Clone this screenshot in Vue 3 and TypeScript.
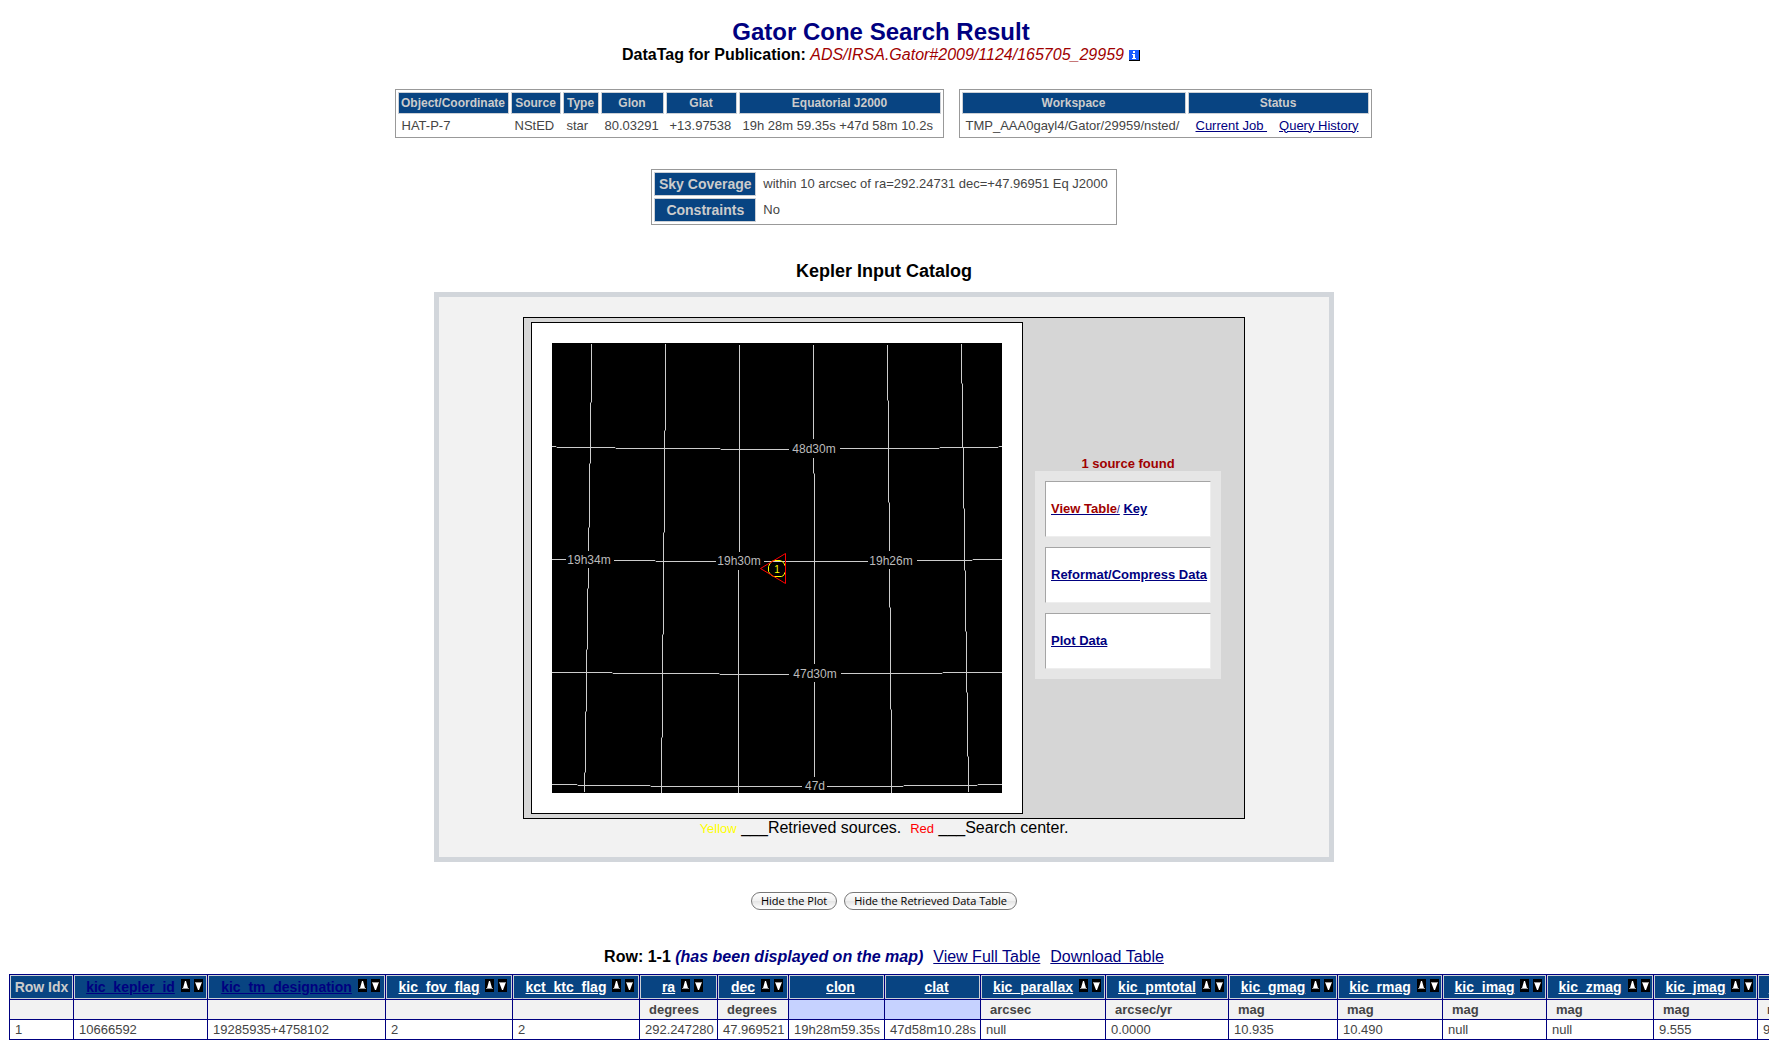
<script setup lang="ts">
interface Column {
  name: string
  width: number
  unit: string
  value: string
  sortable: boolean
  link: boolean
  key?: boolean
  derived?: boolean
}

interface GridLabel {
  text: string
  x: number
  y: number
}

const objectHeads = [
  { label: 'Object/Coordinate', value: 'HAT-P-7', width: 111 },
  { label: 'Source', value: 'NStED', width: 50 },
  { label: 'Type', value: 'star', width: 36 },
  { label: 'Glon', value: '80.03291', width: 63 },
  { label: 'Glat', value: '+13.97538', width: 71 },
  { label: 'Equatorial J2000', value: '19h 28m 59.35s +47d 58m 10.2s', width: 202 },
]

function column(name: string, width: number, unit: string, value: string, extra: Partial<Column> = {}): Column {
  return { name, width, unit, value, sortable: true, link: true, ...extra }
}

const columns: Column[] = [
  column('Row Idx', 64, '', '1', { sortable: false, link: false }),
  column('kic_kepler_id', 134, '', '10666592', { key: true }),
  column('kic_tm_designation', 178, '', '19285935+4758102', { key: true }),
  column('kic_fov_flag', 127, '', '2'),
  column('kct_ktc_flag', 127, '', '2'),
  column('ra', 78, 'degrees', '292.247280'),
  column('dec', 71, 'degrees', '47.969521'),
  column('clon', 96, '', '19h28m59.35s', { sortable: false, derived: true }),
  column('clat', 96, '', '47d58m10.28s', { sortable: false, derived: true }),
  column('kic_parallax', 125, 'arcsec', 'null'),
  column('kic_pmtotal', 123, 'arcsec/yr', '0.0000'),
  column('kic_gmag', 109, 'mag', '10.935'),
  column('kic_rmag', 105, 'mag', '10.490'),
  column('kic_imag', 104, 'mag', 'null'),
  column('kic_zmag', 107, 'mag', 'null'),
  column('kic_jmag', 104, 'mag', '9.555'),
  column('kic_hmag', 107, 'mag', '9.344'),
]

const tableWidth = columns.reduce((sum, c) => sum + c.width, 1)

const meridians = [
  'M39.5 1V59L38.5 60V120L37.5 121V184L36.5 185V208M36.5 225V245L35.5 246V306L34.5 307V368L33.5 369V429L32.5 430V449',
  'M113.5 1V87L112.5 88V189L111.5 190V291L110.5 292V394L109.5 395V450',
  'M187.5 2V209M186.5 227V450',
  'M261.5 2V96M261.5 115V130L262.5 131V321M262.5 339V434',
  'M335.5 2V57L336.5 58V159L337.5 160V208M337.5 226V264L338.5 265V366L339.5 367V450',
  'M409.5 1V40L410.5 41V104L411.5 105V165L412.5 166V227L413.5 228V288L414.5 289V349L415.5 350V413L416.5 414V449',
]

const parallels = [
  'M0 103.5H4L5 104.5H63L64 105.5H168L169 106.5H237M288 105.5H387L388 104.5H446L447 103.5H450',
  'M0 216.5H14M62 217.5H103L104 218.5H164M212 218.5H316M365 217.5H420L421 216.5H450',
  'M0 329.5H60L61 330.5H167L168 331.5H237M289 330.5H390L391 329.5H450',
  'M0 441.5H25L26 442.5H98L99 443.5H250M275 443.5H351L352 442.5H425L426 441.5H450',
]

const gridLabels: GridLabel[] = [
  { text: '48d30m', x: 262, y: 110 },
  { text: '19h34m', x: 37, y: 221 },
  { text: '19h30m', x: 187, y: 222 },
  { text: '19h26m', x: 339, y: 222 },
  { text: '47d30m', x: 263, y: 335 },
  { text: '47d', x: 263, y: 447 },
]
</script>

<template>
  <main class="page">
    <div class="sheet">
      <header class="masthead">
        <h1>Gator Cone Search Result</h1>
        <p>
          <b>DataTag for Publication:&nbsp;</b>
          <i class="tag">ADS/IRSA.Gator#2009/1124/165705_29959</i>
          <a class="info" href="#info" aria-label="About the DataTag">
            <svg width="11" height="11" viewBox="0 0 11 11" shape-rendering="crispEdges" aria-hidden="true">
              <rect width="11" height="11" fill="#000" />
              <rect width="10" height="10" fill="#1a5cff" />
              <path d="M4 1h2v2H4zM3 4h3v4h1v1H3V8h1V5H3z" fill="#fff" />
            </svg>
          </a>
        </p>
      </header>

      <section class="summary">
        <table class="box">
          <colgroup>
            <col v-for="h in objectHeads" :key="h.label" :style="{ width: h.width + 'px' }" />
          </colgroup>
          <thead>
            <tr><th v-for="h in objectHeads" :key="h.label" scope="col">{{ h.label }}</th></tr>
          </thead>
          <tbody>
            <tr><td v-for="h in objectHeads" :key="h.label">{{ h.value }}</td></tr>
          </tbody>
        </table>
        <table class="box">
          <colgroup>
            <col class="workspace-col" />
            <col class="status-col" />
          </colgroup>
          <thead>
            <tr><th scope="col">Workspace</th><th scope="col">Status</th></tr>
          </thead>
          <tbody>
            <tr>
              <td>TMP_AAA0gayl4/Gator/29959/nsted/</td>
              <td class="status"><a href="#job">Current Job&nbsp;</a><a href="#history">Query History</a></td>
            </tr>
          </tbody>
        </table>
      </section>

      <table class="box query">
        <tbody>
          <tr><th scope="row">Sky Coverage</th><td>within 10 arcsec of ra=292.24731 dec=+47.96951 Eq J2000</td></tr>
          <tr><th scope="row">Constraints</th><td>No</td></tr>
        </tbody>
      </table>

      <h2>Kepler Input Catalog</h2>

      <section class="frame">
        <div class="stage">
          <div class="plot">
            <svg width="450" height="450" viewBox="0 0 450 450" role="img" aria-label="Sky map of the search region">
              <rect width="450" height="450" fill="#000" />
              <g fill="none" stroke="#ccc" stroke-width="1">
                <path v-for="d in meridians" :key="d" :d="d" />
                <path v-for="d in parallels" :key="d" :d="d" />
              </g>
              <g class="grid-labels">
                <text v-for="l in gridLabels" :key="l.text" :x="l.x" :y="l.y">{{ l.text }}</text>
              </g>
              <path d="M221.5 217.5H228.5L231.5 219.5L233.5 223.5V228.5L231.5 232.5L229.5 233.5H221.5L218.5 231.5L216.5 228.5V223.5L218.5 219.5Z" fill="none" stroke="#ff0" />
              <path d="M208.5 225.5L233.5 210.5V240.5Z" fill="none" stroke="#f00" />
              <text class="marker" x="225" y="230">1</text>
            </svg>
          </div>
          <div class="side">
            <p class="found">1 source found</p>
            <nav class="menu">
              <div class="entry"><a href="#table"><span class="view">View Table</span><span class="slash">/</span></a>&nbsp;<a href="#key">Key</a></div>
              <div class="entry"><a href="#reformat">Reformat/Compress Data</a></div>
              <div class="entry"><a href="#plot">Plot Data</a></div>
            </nav>
          </div>
        </div>
        <p class="legend"><span class="yellow">Yellow</span> ___Retrieved sources.&nbsp; <span class="red">Red</span> ___Search center.</p>
      </section>

      <div class="actions">
        <button type="button">Hide the Plot</button>
        <button type="button">Hide the Retrieved Data Table</button>
      </div>

      <p class="rows">
        <b>Row: 1-1 <i>(has been displayed on the map)</i></b>
        <a href="#full">View Full Table</a>
        <a href="#download">Download Table</a>
      </p>
    </div>

    <div class="results">
      <table :style="{ width: tableWidth + 'px' }">
        <colgroup>
          <col v-for="c in columns" :key="c.name" :style="{ width: c.width + 'px' }" />
        </colgroup>
        <thead>
          <tr class="names">
            <th v-for="c in columns" :key="c.name" scope="col">
              <div class="name" :class="{ linked: c.link }">
                <a v-if="c.link" :href="'#' + c.name" :class="{ key: c.key }">{{ c.name }}</a>
                <span v-else>{{ c.name }}</span>
                <span v-if="c.sortable" class="sorters">
                  <button type="button" :aria-label="'Sort ' + c.name + ' ascending'">
                    <svg width="9" height="13" viewBox="0 0 9 13" aria-hidden="true">
                      <rect width="9" height="13" fill="#000" />
                      <path d="M4 2h1L7 9H2z" fill="#fff" /><path d="M1 9.5h7" stroke="#999" />
                    </svg>
                  </button>
                  <button type="button" :aria-label="'Sort ' + c.name + ' descending'">
                    <svg width="9" height="13" viewBox="0 0 9 13" aria-hidden="true">
                      <rect width="9" height="13" fill="#000" />
                      <path d="M1 3h7L5 11H4z" fill="#fff" /><path d="M1 3.5h7" stroke="#999" />
                    </svg>
                  </button>
                </span>
              </div>
            </th>
          </tr>
          <tr class="units">
            <td v-for="c in columns" :key="c.name" :class="{ derived: c.derived }">{{ c.unit }}</td>
          </tr>
        </thead>
        <tbody>
          <tr>
            <td v-for="c in columns" :key="c.name">{{ c.value }}</td>
          </tr>
        </tbody>
      </table>
    </div>
  </main>
</template>

<style>
body {
  margin: 0;
  background: #fff;
}
</style>

<style scoped>
.page {
  padding: 18px 0 20px;
  color: #000;
  font: 16px/18px "Liberation Sans", Arial, sans-serif;
}

.sheet {
  display: flex;
  flex-direction: column;
  align-items: center;
  padding-right: 1px;
}

h1,
h2,
p {
  margin: 0;
}

a {
  color: #000080;
}

.masthead {
  padding-right: 6px;
  text-align: center;
}

h1 {
  color: #000080;
  font-size: 24px;
  line-height: 28px;
}

.tag {
  color: #a00000;
}

.info {
  margin-left: 5px;
}

.info svg {
  vertical-align: -1px;
}

.summary {
  display: flex;
  flex-wrap: wrap;
  justify-content: center;
  gap: 15px;
  margin: 25px 2px 31px 0;
}

.box {
  border: 1px solid #999;
  border-spacing: 2px;
  color: #444;
  font-size: 13px;
  line-height: 16px;
  white-space: nowrap;
}

.box th {
  box-sizing: border-box;
  height: 22px;
  padding: 0;
  border: 1px solid #ccd0d6;
  background: #084482;
  color: #ccc;
  font-size: 12px;
}

.summary .box {
  table-layout: fixed;
  width: min-content;
}

.summary .box td {
  height: 19px;
  padding: 0 0 0 4px;
}

.workspace-col {
  width: 224px;
}

.status-col {
  width: 181px;
}

.summary .box .status {
  padding-left: 8px;
}

.status a + a {
  margin-left: 12px;
}

.query th {
  width: 102px;
  height: 24px;
  font-size: 14px;
}

.query td {
  padding: 0 6px 0 5px;
}

h2 {
  margin: 36px 0 11px;
  font-size: 18px;
  line-height: 20px;
}

.frame {
  box-sizing: border-box;
  display: flex;
  flex-direction: column;
  align-items: center;
  width: 900px;
  max-width: 100%;
  padding: 20px 20px 19px;
  border: 5px solid #d2d6db;
  background: #f2f2f2;
}

.stage {
  display: flex;
  align-items: center;
  gap: 12px;
  padding: 4px 23px 4px 7px;
  border: 1px solid #000;
  background: #d6d6d6;
}

.plot {
  padding: 20px;
  border: 1px solid #000;
  background: #fff;
}

.plot svg {
  display: block;
}

.grid-labels {
  fill: #bbb;
  font-size: 12px;
  text-anchor: middle;
}

.marker {
  fill: #ff0;
  font-size: 10px;
  text-anchor: middle;
}

.side {
  width: 186px;
  font-size: 13px;
  font-weight: bold;
  line-height: 14px;
}

.found {
  color: #a00000;
  text-align: center;
}

.menu {
  display: flex;
  flex-direction: column;
  gap: 10px;
  padding: 10px;
  background: #e6e6e6;
}

.entry {
  box-sizing: border-box;
  display: flex;
  align-items: center;
  height: 56px;
  padding-left: 5px;
  border: 1px solid;
  border-color: #a5a5a5 #eee #eee #a5a5a5;
  background: #fff;
  white-space: nowrap;
}

.view {
  color: #a00000;
}

.slash {
  font-size: 10px;
  font-weight: normal;
}

.yellow,
.red {
  color: #ff0;
  font-size: 13px;
}

.red {
  color: #f00;
}

.actions {
  display: flex;
  gap: 7px;
  margin: 30px 0 38px;
}

.actions button {
  height: 18px;
  padding: 0 9px;
  border: 1px solid #777;
  border-radius: 9px;
  background: linear-gradient(#fff, #f0f0f0 50%, #e4e4e4 51%, #fff);
  color: #000;
  font: 11px/14px "Open Sans", "Noto Sans", sans-serif;
}

.rows i {
  color: #000080;
}

.rows a {
  margin-left: 10px;
}

.results {
  margin-top: 8px;
  padding-left: 9px;
  overflow-x: auto;
  scrollbar-width: none;
}

.results table {
  table-layout: fixed;
  border-collapse: collapse;
  color: #444;
  font-size: 13px;
  line-height: 16px;
  white-space: nowrap;
}

.results th,
.results td {
  height: 19px;
  padding: 0 0 0 5px;
  border: 1px solid #000080;
}

.results th {
  height: 24px;
  padding: 0;
  background: #084482;
  box-shadow: inset 0 0 0 1px #ccd0d6;
  color: #ccc;
  font-size: 14px;
}

.name {
  display: flex;
  justify-content: center;
  gap: 6px;
  height: 16px;
}

.linked {
  padding-left: 8px;
}

.name a {
  color: #fff;
}

.name .key {
  color: #000080;
}

.sorters {
  display: flex;
  gap: 4px;
}

.name button {
  display: block;
  width: 9px;
  height: 13px;
  padding: 0;
  border: 0;
  background: none;
}

.name svg {
  display: block;
}

.results .units td {
  padding-left: 9px;
  background: #f2f2f2;
  font-weight: bold;
}

.results .units .derived {
  background: #c6d2ff;
}
</style>
